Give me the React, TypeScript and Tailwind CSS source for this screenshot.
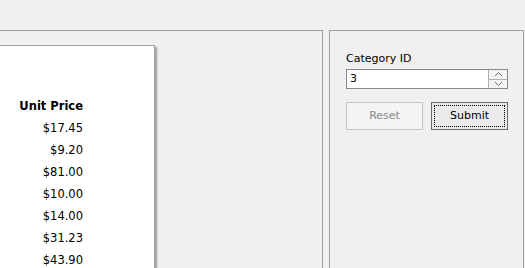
import React from "react";

const prices = ["$17.45", "$9.20", "$81.00", "$10.00", "$14.00", "$31.23", "$43.90"];

function Chevron({ up }: { up: boolean }) {
  return (
    <svg width="9" height="6" viewBox="0 0 9 6" className="block">
      {up ? (
        <polyline points="1,5 4.5,1.5 8,5" fill="none" stroke="#6d6d6d" strokeWidth="1" />
      ) : (
        <polyline points="1,1 4.5,4.5 8,1" fill="none" stroke="#6d6d6d" strokeWidth="1" />
      )}
    </svg>
  );
}

export default function App() {
  return (
    <div
      className="w-[525px] h-[268px] overflow-hidden bg-[#f0f0f0] flex flex-col text-[11px] text-black"
      style={{ fontFamily: '"DejaVu Sans", Tahoma, sans-serif' }}
    >
      <div className="h-[30px] shrink-0 bg-[#f0f0f0]" />
      <div className="flex flex-1 min-h-0">
        {/* left preview area */}
        <div className="w-[323px] shrink-0 border-t border-r border-[#a0a0a0] bg-[#f0f0f0] pt-[14px] overflow-hidden">
          <div className="w-[155px] h-[260px] bg-white border border-l-0 border-[#a0a0a0] shadow-[2px_2px_2px_rgba(0,0,0,0.35)] pt-[50px]">
            <div className="w-[83px] text-right">
              <div className="h-[22px] flex items-center justify-end font-bold text-[11.5px]">Unit Price</div>
              {prices.map((p) => (
                <div key={p} className="h-[22px] flex items-center justify-end text-[11.5px]">
                  {p}
                </div>
              ))}
            </div>
          </div>
        </div>
        {/* gap */}
        <div className="w-[6px] shrink-0" />
        {/* right panel */}
        <div className="w-[195px] h-[260px] shrink-0 border border-[#a0a0a0] bg-[#f0f0f0] pt-[20px] pl-[16px]">
          <div className="h-[15px] leading-[15px]">Category ID</div>
          <div className="mt-[3px] w-[162px] h-[20px] border border-[#8a8a8a] bg-white flex">
            <div className="flex-1 pl-[3px] leading-[18px]">3</div>
            <div className="w-[19px] border-l border-[#b0b0b0] flex flex-col">
              <div className="flex-1 flex items-center justify-center border-b border-[#b0b0b0] bg-[#f4f4f4]">
                <Chevron up />
              </div>
              <div className="flex-1 flex items-center justify-center bg-[#f4f4f4]">
                <Chevron up={false} />
              </div>
            </div>
          </div>
          <div className="mt-[13px] flex gap-[8px]">
            <div className="w-[77px] h-[28px] border border-[#c4c4c4] bg-[#f4f4f4] text-[#8b8b8b] flex items-center justify-center">
              Reset
            </div>
            <div className="w-[77px] h-[28px] border border-[#6a6a6a] bg-[#eaeaea] p-[2px]">
              <div className="w-full h-full border border-dotted border-black flex items-center justify-center">
                Submit
              </div>
            </div>
          </div>
        </div>
      </div>
    </div>
  );
}
